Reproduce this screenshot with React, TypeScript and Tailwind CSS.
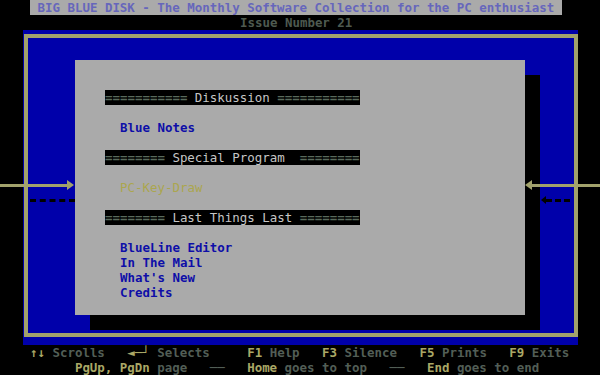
const KEY = "text-[#aaa866]";
const DESC = "text-[#525e56]";

function Header({ left, title, right }: { left: string; title: string; right: string }) {
  return (
    <div className="w-[255px] h-[15px] bg-black">
      <span className="text-[#5a6a5c]">{left}</span>
      <span className="text-[#c6c6c6] font-normal">{title}</span>
      <span className="text-[#5a6a5c]">{right}</span>
    </div>
  );
}

function Item({ text, dim }: { text: string; dim?: boolean }) {
  return (
    <div className={`h-[15px] pl-[15px] ${dim ? "text-[#aba64e] font-normal" : "text-[#0e0ea8]"}`}>{text}</div>
  );
}

const Gap = () => <div className="h-[15px]" />;

export default function App() {
  return (
    <div className="relative w-[600px] h-[375px] overflow-hidden bg-black font-['DejaVu_Sans_Mono','Liberation_Mono',monospace] text-[12.45px] leading-[15px] font-bold whitespace-pre">
      {/* title bar */}
      <div className="h-[15px] pl-[30px]">
        <div className="w-[532px] h-[15px] bg-[#aaaaaa] pl-[7.5px] text-[#6666bc]">
          BIG BLUE DISK - The Monthly Software Collection for the PC enthusiast
        </div>
      </div>
      <div className="h-[15px] pl-[240px] text-[#4e5a50]">Issue Number 21</div>

      {/* main blue window */}
      <div className="ml-[22.5px] w-[555px] h-[315px] bg-[#0000aa] pl-[1.5px] pt-[4px] pb-[8px]">
        <div className="h-full border-[4px] border-[#a2a26c] pl-[47px] pt-[22px]">
          <div className="w-[450px] h-[255px] bg-[#aaaaaa] shadow-[15px_15px_0_0_#000] pt-[30px] pl-[30px]">
            <Header left="===========" title=" Diskussion " right="===========" />
            <Gap />
            <Item text="Blue Notes" />
            <Gap />
            <Header left="========" title=" Special Program  " right="========" />
            <Gap />
            <Item text="PC-Key-Draw" dim />
            <Gap />
            <Header left="========" title=" Last Things Last " right="========" />
            <Gap />
            <Item text="BlueLine Editor" />
            <Item text="In The Mail" />
            <Item text="What's New" />
            <Item text="Credits" />
          </div>
        </div>
      </div>

      {/* key help */}
      <div className="h-[15px]">
        {"    "}<span className={KEY}>↑↓</span> <span className={DESC}>Scrolls</span>{"   "}
        <span className={KEY}>◄─┘</span> <span className={DESC}>Selects</span>{"     "}
        <span className={KEY}>F1</span> <span className={DESC}>Help</span>{"   "}
        <span className={KEY}>F3</span> <span className={DESC}>Silence</span>{"   "}
        <span className={KEY}>F5</span> <span className={DESC}>Prints</span>{"   "}
        <span className={KEY}>F9</span> <span className={DESC}>Exits</span>
      </div>
      <div className="h-[15px]">
        {"          "}<span className={KEY}>PgUp, PgDn</span> <span className={DESC}>page</span>{"   "}
        <span className={DESC}>──</span>{"   "}
        <span className={KEY}>Home</span> <span className={DESC}>goes to top</span>{"   "}
        <span className={DESC}>──</span>{"   "}
        <span className={KEY}>End</span> <span className={DESC}>goes to end</span>
      </div>

      {/* scroll arrows crossing the window */}
      <div className="absolute left-0 top-[184px] w-[67px] h-[3px] bg-[#a2a26c]" />
      <div className="absolute left-[67px] top-[180px] w-0 h-0 border-y-[5.5px] border-y-transparent border-l-[7px] border-l-[#a2a26c]" />
      <div className="absolute left-[30px] top-[199px] w-[45px] border-t-[3px] border-dashed border-black" />
      <div className="absolute left-[525px] top-[180px] w-0 h-0 border-y-[5.5px] border-y-transparent border-r-[7px] border-r-[#a2a26c]" />
      <div className="absolute left-[532px] top-[184px] w-[68px] h-[3px] bg-[#a2a26c]" />
      <div className="absolute left-[541px] top-[196px] w-0 h-0 border-y-[4.5px] border-y-transparent border-r-[5px] border-r-black" />
      <div className="absolute left-[546px] top-[199px] w-[24px] border-t-[3px] border-dashed border-black" />
    </div>
  );
}
